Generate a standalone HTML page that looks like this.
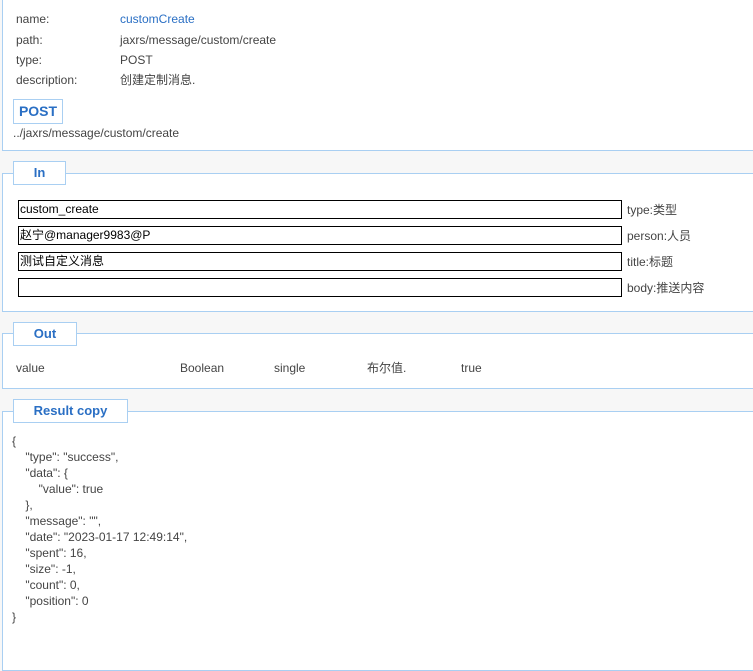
<!DOCTYPE html><html><head><meta charset="utf-8"><style>
body{margin:0;width:753px;height:633px;background:#f7f7f7;font-family:"Liberation Sans","Noto Sans CJK SC",sans-serif;font-size:12px;color:#444;position:relative;overflow:hidden}
.a{position:absolute;white-space:nowrap;line-height:16px}
.box{position:absolute;left:2px;width:800px;background:#fff;border:1px solid #a9cff2;box-sizing:border-box}
.lg{position:absolute;background:#fff;border:1px solid #a9cff2;box-sizing:border-box;color:#2a6fc4;font-weight:bold;font-size:13px;text-align:center;line-height:21px}
.in{position:absolute;left:18px;width:604px;height:19px;border:1px solid #000;box-sizing:border-box;background:#fff;color:#000;line-height:16px;padding-left:1px}
pre{margin:0;font-family:inherit;line-height:16px;white-space:pre!important}
</style></head><body>
<div class="box" style="top:-1px;height:152px"></div>
<div class="a" style="left:16px;top:11px">name:</div><div class="a" style="left:120px;top:11px;color:#2a6fc4">customCreate</div>
<div class="a" style="left:16px;top:32px">path:</div><div class="a" style="left:120px;top:32px">jaxrs/message/custom/create</div>
<div class="a" style="left:16px;top:52px">type:</div><div class="a" style="left:120px;top:52px">POST</div>
<div class="a" style="left:16px;top:72px">description:</div><div class="a" style="left:120px;top:72px">创建定制消息.</div>
<div class="lg" style="left:13px;top:99px;width:50px;height:25px;font-size:14px;line-height:23px">POST</div>
<div class="a" style="left:13px;top:125px">../jaxrs/message/custom/create</div>
<div class="box" style="top:173px;height:139px"></div>
<div class="lg" style="left:13px;top:161px;width:53px;height:24px">In</div>
<div class="in" style="top:200px">custom_create</div><div class="a" style="left:627px;top:202px">type:类型</div>
<div class="in" style="top:226px">赵宁@manager9983@P</div><div class="a" style="left:627px;top:228px">person:人员</div>
<div class="in" style="top:252px">测试自定义消息</div><div class="a" style="left:627px;top:254px">title:标题</div>
<div class="in" style="top:278px"></div><div class="a" style="left:627px;top:280px">body:推送内容</div>
<div class="box" style="top:333px;height:56px"></div>
<div class="lg" style="left:13px;top:322px;width:64px;height:24px">Out</div>
<div class="a" style="left:16px;top:360px">value</div><div class="a" style="left:180px;top:360px">Boolean</div><div class="a" style="left:274px;top:360px">single</div><div class="a" style="left:367px;top:360px">布尔值.</div><div class="a" style="left:461px;top:360px">true</div>
<div class="box" style="top:411px;height:260px"></div>
<div class="lg" style="left:13px;top:399px;width:115px;height:24px">Result copy</div>
<pre class="a" style="left:12px;top:433px">{
    "type": "success",
    "data": {
        "value": true
    },
    "message": "",
    "date": "2023-01-17 12:49:14",
    "spent": 16,
    "size": -1,
    "count": 0,
    "position": 0
}</pre>
</body></html>
